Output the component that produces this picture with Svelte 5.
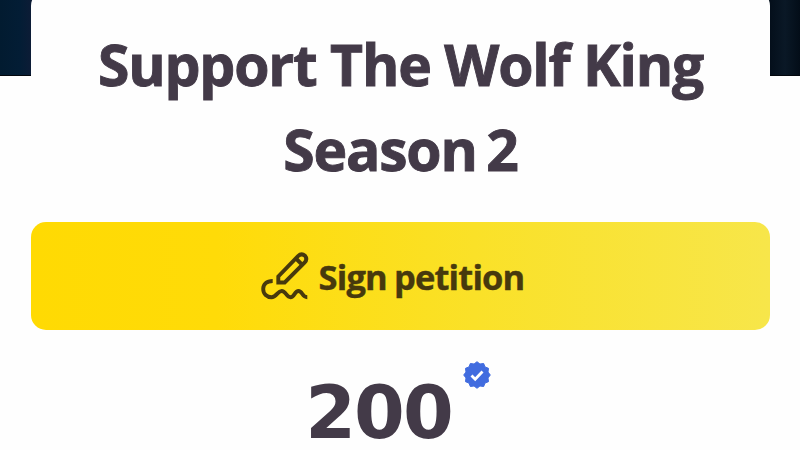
<style>
    :global(body) {
        margin: 0;
        background-color: #fefefe;
    }

    .page {
        position: relative;
        width: 800px;
        height: 450px;
        overflow: hidden;
        font-family: "Open Sans", "Noto Sans", sans-serif;
        font-weight: 700;
        color: #433a48;
    }

    .cover {
        position: absolute;
        top: 0;
        left: 0;
        width: 100%;
        height: 76px;
        background: linear-gradient(to right, #021b30 0, #031d35 20px, #0c1c36 31px, #040f1b 770px, #0a1826 785px, #030d18 100%);
        border-bottom: 1px solid #03070d;
        box-sizing: border-box;
    }

    .card {
        position: relative;
        box-sizing: border-box;
        width: 739px;
        height: 460px;
        margin: -10px 0 0 31px;
        padding-top: 32px;
        border-radius: 16px 16px 0 0;
        background-color: #fefefe;
        display: flex;
        flex-direction: column;
        align-items: center;
    }

    h1 {
        margin: 0;
        font-size: 57px;
        line-height: 85px;
        letter-spacing: -1.2px;
        word-spacing: 0;
        -webkit-text-stroke: 0.9px currentColor;
        text-align: center;
        white-space: nowrap;
    }

    .title-line {
        display: block;
    }

    .title-line:last-child {
        word-spacing: -4px;
    }

    .sign-button {
        box-sizing: border-box;
        width: 100%;
        height: 108px;
        margin-top: 30px;
        padding: 0 17px 0 0;
        border: 0;
        border-radius: 15px;
        background: linear-gradient(to right, #ffda03 0%, #ffdb08 25%, #fae128 60%, #f7e64a 100%);
        display: flex;
        flex-shrink: 0;
        align-items: center;
        justify-content: center;
        gap: 10px;
        font: inherit;
        font-size: 34.5px;
        letter-spacing: -0.85px;
        word-spacing: -1px;
        color: #47390d;
        -webkit-text-stroke: 0.4px currentColor;
        cursor: pointer;
        white-space: nowrap;
    }

    .sign-icon {
        width: 49px;
        height: 50px;
        margin-top: -2px;
    }

    .signatures {
        display: flex;
        align-items: flex-start;
        gap: 11px;
        margin: 31px 5px 0 0;
    }

    .count {
        margin-top: 14px;
        font-family: "DejaVu Sans", sans-serif;
        font-size: 73px;
        line-height: 76px;
        letter-spacing: -2px;
    }

    .badge {
        width: 28px;
        height: 28px;
    }
</style>

<script>
    export let title = ['Support The Wolf King', 'Season 2'];
    export let signatures = 200;

    // outline of the verified badge: twelve rounded teeth
    const teeth = 12;
    const points = Array.from({ length: teeth * 2 }, (_, i) => {
        const r = i % 2 ? 11.4 : 13.3;
        const a = (i * Math.PI) / teeth - Math.PI / 2;
        return `${(14 + r * Math.cos(a)).toFixed(2)},${(14 + r * Math.sin(a)).toFixed(2)}`;
    }).join(' ');
</script>

<main class="page">
    <div class="cover"></div>
    <section class="card">
        <h1>
            {#each title as line}
                <span class="title-line">{line}</span>
            {/each}
        </h1>
        <button class="sign-button">
            <svg class="sign-icon" viewBox="0 0 49 50" fill="none" stroke="currentColor" stroke-width="3.9">
                <path d="M18.300 32.500V26.500L38 6.200Q41.500 2.800 45 5.800Q47.800 9.300 44.500 12.700L24.700 32.500Z" />
                <path d="M36 8.500L42.300 14.800" />
                <path d="M12.700 31C6.500 31 3.200 34.500 3.200 39C3.200 44 7 47.200 11.500 47.200C16.500 47.200 17.500 41 21.700 41C25.800 41 26.500 47.200 30.500 47.200C34.500 47.200 34.500 41 38.500 41C42.500 41 42 47.200 47.300 47.200" />
            </svg>
            <span class="sign-label">Sign petition</span>
        </button>
        <div class="signatures">
            <span class="count">{signatures}</span>
            <svg class="badge" viewBox="0 0 28 28">
                <polygon {points} fill="#416cdf" stroke="#416cdf" stroke-width="1" stroke-linejoin="round" />
                <path d="M8.500 14.500L12.200 18.200L19.500 10.500" fill="none" stroke="#fff" stroke-width="2.800" />
            </svg>
        </div>
    </section>
</main>
